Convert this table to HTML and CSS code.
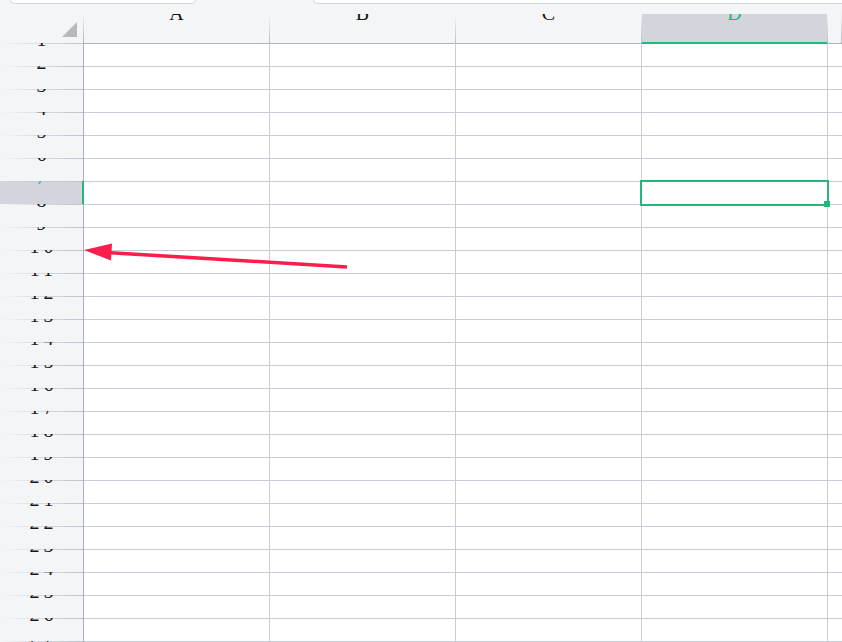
FILE: index.html
```html
<!DOCTYPE html>
<html>
<head>
<meta charset="utf-8">
<link rel="stylesheet" href="styles.css">
</head>
<body>
<div class="page">
  <div class="topbar">
    <div class="box box-a"></div>
    <div class="box box-b"></div>
  </div>
  <div class="head">
    <div class="corner"><svg width="15" height="15" viewBox="0 0 15 15"><polygon points="15,0 15,15 0,15" fill="#b8b8b8"/></svg></div>
    <div class="ch"><span class="lbl">A</span></div>
    <div class="ch"><span class="lbl">B</span></div>
    <div class="ch"><span class="lbl">C</span></div>
    <div class="ch ch-sel"><span class="lbl">D</span></div>
    <div class="ch ch-rest"></div>
  </div>
  <div class="body" id="body"></div>
  <svg class="arrow" width="842" height="642" viewBox="0 0 842 642">
    <line x1="347" y1="267" x2="106" y2="252.4" stroke="#f91e4b" stroke-width="3.5"/>
    <polygon points="84,250 112,243.5 111,260.5" fill="#f91e4b"/>
  </svg>
</div>
<script>
  var body = document.getElementById('body');
  var html = '';
  for (var r = 1; r <= 27; r++) {
    var sel = r === 7;
    html += '<div class="row' + (r === 1 ? ' first' : '') + '">';
    html += '<div class="rh' + (sel ? ' rh-sel' : '') + '"><span class="num">' + r + '</span></div>';
    for (var c = 0; c < 4; c++) {
      var cls = 'cell' + (c === 3 && r === 1 ? ' d-top' : '');
      if (c === 3 && sel) {
        html += '<div class="' + cls + ' active"><div class="selbox"></div><div class="handle"></div></div>';
      } else {
        html += '<div class="' + cls + '"></div>';
      }
    }
    html += '<div class="cell rest"></div>';
    html += '</div>';
  }
  body.innerHTML = html;
</script>
</body>
</html>
```
FILE: styles.css
```css
html, body {
  margin: 0;
  padding: 0;
}
body {
  width: 842px;
  height: 642px;
  overflow: hidden;
  background: #f4f5f7;
  font-family: "Liberation Serif", "Times New Roman", serif;
  color: #151515;
}
.page {
  position: relative;
  width: 842px;
  height: 642px;
  overflow: hidden;
}
.topbar {
  height: 14px;
  display: flex;
  align-items: flex-end;
  overflow: hidden;
  padding-left: 10px;
  gap: 117px;
}
.box {
  height: 24px;
  margin-bottom: 10px;
  box-sizing: border-box;
  border: 1px solid #d3d6dd;
  border-radius: 4px;
  background: #ffffff;
  flex: none;
}
.box-a {
  width: 186px;
}
.box-b {
  flex: 1;
  margin-right: -10px;
}
.head {
  display: flex;
  height: 29px;
}
.corner {
  width: 84px;
  flex: none;
  box-sizing: border-box;
  display: flex;
  justify-content: flex-end;
  align-items: flex-start;
  padding-top: 8px;
  padding-right: 7px;
  background: linear-gradient(to bottom, rgba(170, 176, 190, 0), #aab0be) right / 1px 100% no-repeat;
}
.ch {
  width: 186px;
  flex: none;
  overflow: hidden;
  text-align: center;
  box-sizing: border-box;
  padding-right: 1px;
  background: linear-gradient(to bottom, rgba(185, 190, 202, 0), #b9becb) right / 1px 100% no-repeat;
}
.ch-rest {
  flex: 1;
}
.ch-sel {
  background:
    linear-gradient(#21b97a, #21b97a) left bottom / 185px 1px no-repeat,
    linear-gradient(#d2d5dc, #d2d5dc) left top / 185px 100% no-repeat,
    linear-gradient(to bottom, rgba(185, 190, 202, 0), #b9becb) right / 1px 100% no-repeat;
  color: #21b97a;
}
.lbl {
  display: block;
  font-size: 20px;
  line-height: 20px;
  margin-top: -11px;
}
.row {
  display: flex;
  height: 23px;
}
.rh {
  width: 83px;
  flex: none;
  border-right: 1px solid #aab0be;
  background: #f4f5f7 linear-gradient(to right, #f4f5f7, #bcc1cd) left top / 100% 1px no-repeat;
  overflow: hidden;
  text-align: center;
  padding-left: 4px;
  box-sizing: content-box;
  width: 79px;
}
.rh-sel {
  background: #d2d5dc linear-gradient(to right, #d2d5dc, #bcc1cd) left top / 100% 1px no-repeat;
  border-right: 2px solid #21b97a;
  width: 78px;
  color: #21b97a;
}
.num {
  display: block;
  font-size: 20px;
  line-height: 20px;
  letter-spacing: 4px;
  margin-top: -14px;
}
.cell {
  width: 185px;
  flex: none;
  border-top: 1px solid #c9cdd7;
  border-right: 1px solid #c9cdd7;
  background: #ffffff;
}
.first .cell {
  border-top-color: #aab0be;
}
.first .cell.d-top {
  border-top-color: #21b97a;
}
.cell.rest {
  flex: 1;
  border-right: none;
}
.active {
  position: relative;
}
.selbox {
  position: absolute;
  left: -2px;
  top: -2px;
  width: 189px;
  height: 26px;
  box-sizing: border-box;
  border: 2px solid #21b97a;
}
.handle {
  position: absolute;
  left: 182px;
  top: 19px;
  width: 6px;
  height: 6px;
  background: #21b97a;
}
.arrow {
  position: absolute;
  left: 0;
  top: 0;
  pointer-events: none;
}
```
